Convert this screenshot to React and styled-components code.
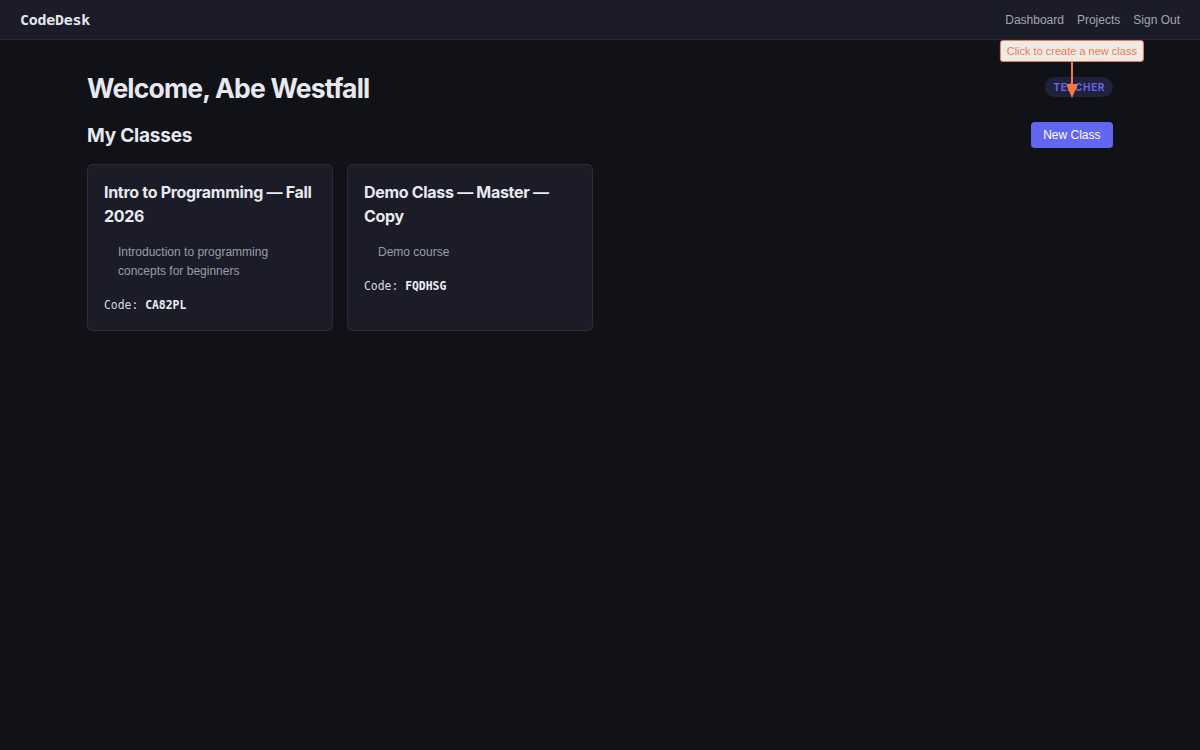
import React from "react";
import styled, { createGlobalStyle } from "styled-components";

const Global = createGlobalStyle`
  html, body { margin: 0; padding: 0; background: #111217; }
  body { font-family: "Liberation Sans", Arial, sans-serif; color: #e6e7ee; min-height: 750px; }
  * { box-sizing: border-box; }
`;

const Page = styled.div`
  min-height: 750px;
  background: #111217;
`;

const Header = styled.header`
  height: 40px;
  display: flex;
  align-items: center;
  justify-content: space-between;
  padding: 0 20px;
  background: #1b1c27;
  border-bottom: 1px solid #2a2b37;
`;

const Logo = styled.div`
  font-family: "DejaVu Sans Mono", monospace;
  font-weight: 700;
  font-size: 14.9px;
  color: #e4e5ee;
  letter-spacing: -0.2px;
`;

const Nav = styled.nav`
  display: flex;
  gap: 13px;
`;

const NavLink = styled.a`
  font-size: 12px;
  color: #a3a5b6;
  text-decoration: none;
`;

const Main = styled.main`
  max-width: 1026px;
  margin: 0 auto;
  padding-top: 30px;
`;

const Row = styled.div`
  display: flex;
  align-items: ${(p) => p.$align || "center"};
  justify-content: space-between;
  margin-bottom: ${(p) => p.$mb || 0}px;
`;

const Title = styled.h1`
  margin: 0;
  font-family: Inter, sans-serif;
  font-size: 26.5px;
  font-weight: 700;
  line-height: 36px;
  color: #e8e9f0;
  letter-spacing: -0.8px;
`;

const Subtitle = styled.h2`
  margin: 1px 0 0;
  font-family: Inter, sans-serif;
  font-size: 19px;
  font-weight: 700;
  line-height: 26px;
  color: #e8e9f0;
  letter-spacing: -0.2px;
`;

const Badge = styled.span`
  display: inline-block;
  margin-top: -3px;
  padding: 0 8px;
  height: 20px;
  line-height: 20px;
  border-radius: 10px;
  background: #20213a;
  color: #6466e6;
  font-family: Inter, sans-serif;
  font-size: 10px;
  font-weight: 700;
  letter-spacing: 0.6px;
  text-transform: uppercase;
`;

const Anchor = styled.div`
  position: relative;
`;

const Tooltip = styled.div`
  position: absolute;
  left: 50%;
  top: -82px;
  transform: translateX(-50%);
  white-space: nowrap;
  background: #edebe9;
  border: 1px solid #f07a45;
  border-radius: 3px;
  color: #f27a46;
  font-size: 11px;
  height: 22px;
  line-height: 20px;
  padding: 0 6px;
  z-index: 2;
`;

const Arrow = styled.svg`
  position: absolute;
  left: 50%;
  top: -60px;
  transform: translateX(-50%);
  overflow: visible;
  z-index: 3;
`;

const Button = styled.button`
  display: block;
  background: #6366f1;
  color: #fff;
  border: none;
  border-radius: 4px;
  height: 26px;
  padding: 0 12.5px;
  font-family: "Liberation Sans", Arial, sans-serif;
  font-size: 12px;
  font-weight: 400;
`;

const Grid = styled.div`
  display: grid;
  grid-template-columns: repeat(4, 1fr);
  gap: 14px;
`;

const Card = styled.div`
  background: #1b1c27;
  border: 1px solid #2b2c38;
  border-radius: 5px;
  padding: 15px 16px 15px;
  min-height: 167px;
`;

const CardTitle = styled.h3`
  margin: 0 0 15px;
  font-family: Inter, sans-serif;
  font-size: 16px;
  font-weight: 700;
  line-height: 24px;
  color: #e8e9f0;
  letter-spacing: -0.3px;
`;

const Desc = styled.p`
  margin: 0 0 16px;
  padding-left: 14px;
  font-size: 12px;
  line-height: 19px;
  color: #9a9cac;
`;

const Code = styled.div`
  font-family: "DejaVu Sans Mono", monospace;
  font-size: 11.4px;
  line-height: 16px;
  color: #d9dae3;
  & b { font-weight: 700; color: #eceef5; }
`;

const classes = [
  { title: "Intro to Programming — Fall 2026", desc: "Introduction to programming concepts for beginners", code: "CA82PL" },
  { title: "Demo Class — Master — Copy", desc: "Demo course", code: "FQDHSG" },
];

export default function App() {
  return (
    <Page>
      <Global />
      <Header>
        <Logo>CodeDesk</Logo>
        <Nav>
          <NavLink>Dashboard</NavLink>
          <NavLink>Projects</NavLink>
          <NavLink>Sign Out</NavLink>
        </Nav>
      </Header>
      <Main>
        <Row $mb={16}>
          <Title>Welcome, Abe Westfall</Title>
          <Badge>Teacher</Badge>
        </Row>
        <Row $mb={15} $align="flex-start">
          <Subtitle>My Classes</Subtitle>
          <Anchor>
            <Button>New Class</Button>
            <Tooltip>Click to create a new class</Tooltip>
            <Arrow width="14" height="36" viewBox="0 0 14 36">
              <line x1="7" y1="0" x2="7" y2="24" stroke="#f27a46" strokeWidth="2" />
              <polygon points="1,22 13,22 7,36" fill="#f27a46" />
            </Arrow>
          </Anchor>
        </Row>
        <Grid>
          {classes.map((c) => (
            <Card key={c.code}>
              <CardTitle>{c.title}</CardTitle>
              <Desc>{c.desc}</Desc>
              <Code>
                Code: <b>{c.code}</b>
              </Code>
            </Card>
          ))}
        </Grid>
      </Main>
    </Page>
  );
}
